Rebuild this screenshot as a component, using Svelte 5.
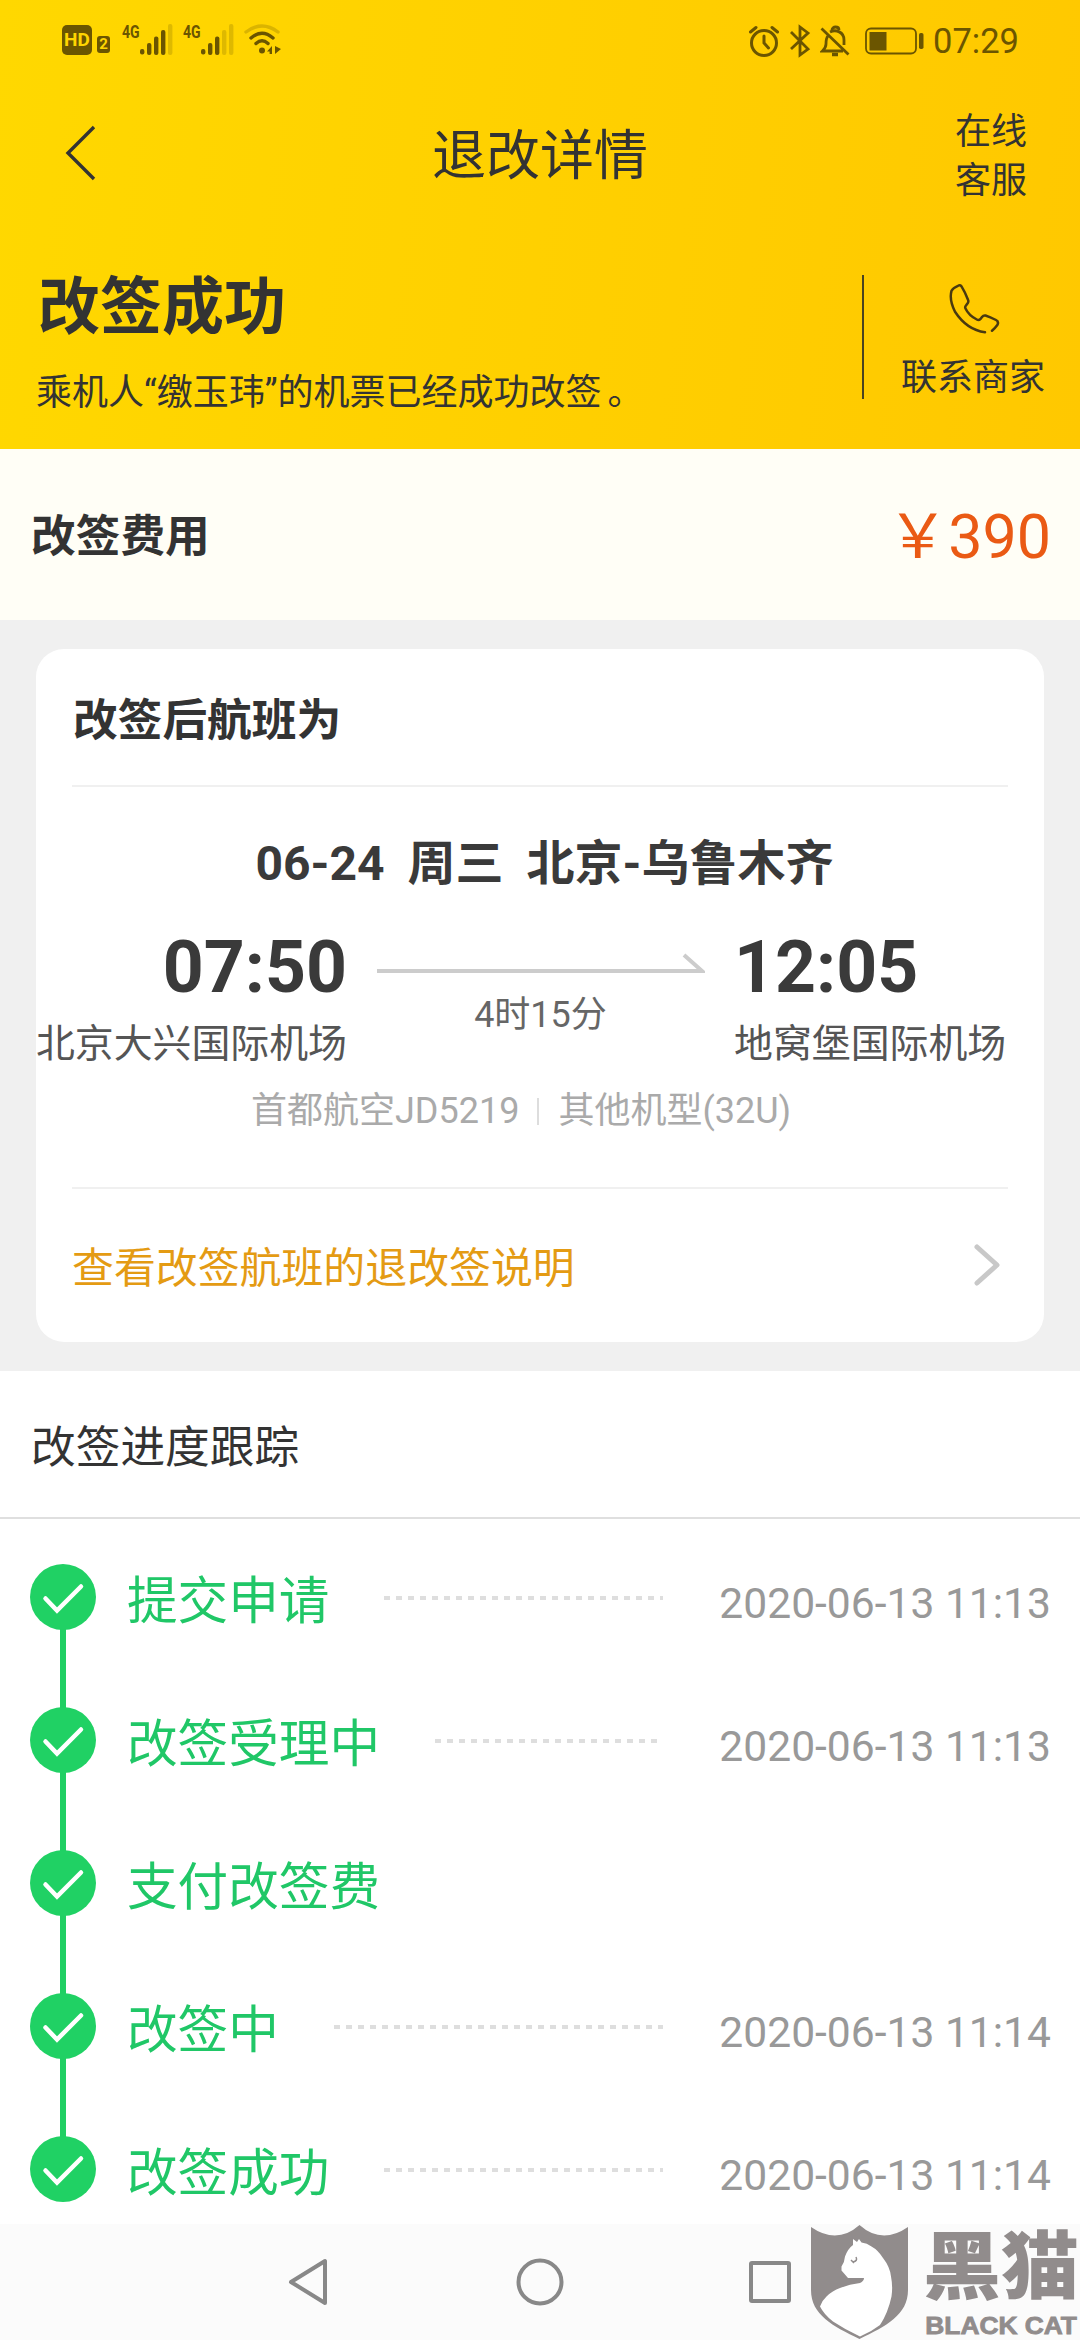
<script lang="ts">
  interface Step {
    name: string;
    time?: string;
  }

  const steps: Step[] = [
    { name: '提交申请', time: '2020-06-13 11:13' },
    { name: '改签受理中', time: '2020-06-13 11:13' },
    { name: '支付改签费' },
    { name: '改签中', time: '2020-06-13 11:14' },
    { name: '改签成功', time: '2020-06-13 11:14' },
  ];

  const signals = [4, 3]; // lit bars per SIM
  const bars = [0, 1, 2, 3, 4];
</script>

<div class="screen">
  <header class="hero">
    <div class="status">
      <div class="status-left">
        <span class="hd">HD</span>
        <span class="sim">2</span>
        {#each signals as lit}
          <div class="signal">
            <span class="net">4G</span>
            <svg width="33" height="31" viewBox="0 0 33 31">
              {#each bars as i}
                <rect
                  x={i * 7}
                  y={[25, 19, 12.5, 6, 0][i]}
                  width="4.4"
                  height={[5.5, 12, 18.5, 25, 31][i]}
                  rx="2"
                  fill="#6b5500"
                  opacity={i < lit ? 1 : 0.22}
                />
              {/each}
            </svg>
          </div>
        {/each}
        <svg class="wifi" width="38" height="31" viewBox="0 0 38 31" fill="none" stroke="#6b5500" stroke-width="3.4" stroke-linecap="round">
          <path d="M2 8Q18 -4 34 8" opacity=".25" />
          <path d="M7 14Q18 4.500 29 14" />
          <path d="M12 19.500Q18 14 24 19.500" />
          <circle cx="18" cy="26.500" r="3" fill="#6b5500" stroke="none" />
          <path d="M28 22v8h-2.400v-2.500h-2.600zM31 22v8l6-5z" fill="#6b5500" stroke="none" />
        </svg>
      </div>
      <div class="status-right">
        <svg width="32" height="32" viewBox="0 0 32 32" fill="none" stroke="#6b5500" stroke-width="3" stroke-linecap="round">
          <circle cx="16" cy="18" r="12.500" />
          <path d="M16 11v7l4.500 5M2.500 7L8 2.500M29.500 7L24 2.500" />
        </svg>
        <svg width="22" height="34" viewBox="0 0 22 34" fill="none" stroke="#6b5500" stroke-width="2.800">
          <path d="M2 8l17 17-8 6V3l8 6L2 25" />
        </svg>
        <svg width="30" height="33" viewBox="0 0 30 33" fill="none" stroke="#6b5500" stroke-width="2.800">
          <path d="M1.500 3.500l27 26M8 11c-2 2-2 5-2 8 0 3-1.500 5-3.500 7H23M10 7c6-3 14 0 14 8v5" />
          <path d="M12 5c0-4 7-4 7 0" />
          <path d="M12 29.500h6" stroke-width="3.500" />
        </svg>
        <svg class="battery" width="60" height="28" viewBox="0 0 60 28">
          <rect x="1" y="1.500" width="50" height="25" rx="5" fill="none" stroke="#6b5500" stroke-width="1.800" />
          <rect x="4.500" y="5" width="17" height="18.500" fill="#6b5500" />
          <rect x="54" y="6" width="4.500" height="16" rx="1.800" fill="#6b5500" />
        </svg>
        <span class="clock">07:29</span>
      </div>
    </div>

    <nav class="navbar">
      <svg class="back" width="32" height="56" viewBox="0 0 32 56" fill="none" stroke="#333" stroke-width="3.400">
        <path d="M29 2L3 28l26 26" />
      </svg>
      <h1>退改详情</h1>
      <div class="service">在线<br />客服</div>
    </nav>

    <div class="result">
      <div class="result-text">
        <h2>改签成功</h2>
        <p>乘机人“缴玉玮”的机票已经成功改签<span class="stop">。</span></p>
      </div>
      <div class="contact">
        <svg width="52" height="52" viewBox="0 0 52 52" fill="none" stroke="#4a3a10" stroke-width="2.500" stroke-linecap="round" stroke-linejoin="round">
          <path d="M43 46.700q3-2.500 5.500-6 1.500-3.200-1.500-4.700-6-3-10.500-4.500-2-.5-3.500 1.500l-1.700 2.200q-1.500 1.500-3.500.3-8-4-11.300-11-.8-1.500.5-3l1.800-2.500q1-1.500.2-3.200-3-8-6.500-13.500-1.500-1.700-3.500-.5-5 2-6.500 5-2.500 9 3.500 21Q18 46 36 48.300" />
        </svg>
        <span>联系商家</span>
      </div>
    </div>
  </header>

  <section class="fee">
    <h3>改签费用</h3>
    <span class="price">￥390</span>
  </section>

  <section class="flight-wrap">
    <div class="card">
      <h3 class="card-title">改签后航班为</h3>

      <div class="flight">
        <div class="route">
          <span>06-24</span>
          <span>周三</span>
          <span>北京-乌鲁木齐</span>
        </div>
        <div class="legs">
          <div class="leg from">
            <strong>07:50</strong>
            <span>北京大兴国际机场</span>
          </div>
          <div class="duration">
            <svg width="328" height="22" viewBox="0 0 328 22" fill="none" stroke="#ccc" stroke-width="4">
              <path d="M0 19h325L307 3" />
            </svg>
            <span>4时15分</span>
          </div>
          <div class="leg">
            <strong>12:05</strong>
            <span>地窝堡国际机场</span>
          </div>
        </div>
        <div class="plane">
          <span>首都航空JD5219</span>
          <i></i>
          <span>其他机型(32U)</span>
        </div>
      </div>

      <div class="rules">
        <span>查看改签航班的退改签说明</span>
        <svg width="30" height="44" viewBox="0 0 30 44" fill="none" stroke="#c8c8c8" stroke-width="5" stroke-linecap="round" stroke-linejoin="round">
          <path d="M4 4l20 18L4 40" />
        </svg>
      </div>
    </div>
  </section>

  <section class="progress">
    <h3>改签进度跟踪</h3>
    <ul>
      {#each steps as step}
        <li>
          <svg class="check" width="66" height="66" viewBox="0 0 66 66">
            <circle cx="33" cy="33" r="33" fill="#20d164" />
            <path d="M15.500 34.500l11.500 12L51 22.500" fill="none" stroke="#fff" stroke-width="4.500" stroke-linecap="round" />
          </svg>
          <span class="name">{step.name}</span>
          {#if step.time}
            <span class="dots"></span>
            <time>{step.time}</time>
          {/if}
        </li>
      {/each}
    </ul>
  </section>

  <footer class="system-nav">
    <svg width="42" height="50" viewBox="0 0 42 50"><path d="M38 4v42L4 25z" /></svg>
    <svg width="50" height="50" viewBox="0 0 50 50"><circle cx="25" cy="25" r="21.500" /></svg>
    <svg width="44" height="44" viewBox="0 0 44 44"><rect x="3" y="3" width="38" height="38" rx="1" /></svg>
  </footer>

  <div class="watermark">
    <svg width="97" height="115" viewBox="0 0 97 115">
      <path d="M0 2Q26 20 48.500 0 71 20 97 2V65C97 90 75 101 48.500 114 22 101 0 90 0 65z" fill="#918c8c" />
      <path d="M42 14l4 3 2-3 2.500 3.500Q56 18 60.500 21.500 67 25 72 33q7 9 8 18.500 2 10 .500 20Q77 88 69 100q-9 7-20 11.500-15-7-27-15-9-7-13-15 2-6 6.500-10 6-6 13.500-8.500Q39 59 49 58q4-2 4-5H37l-6.500-7.500v-4q3-4 3.500-10 3-8 8-11.500z" fill="#fff" />
      <path d="M40 35l3 3M45 32q2 4-3 5" fill="none" stroke="#918c8c" stroke-width="1.500" />
    </svg>
    <div class="brand">
      <span class="brand-cn">黑猫</span>
      <span class="brand-en">BLACK CAT</span>
    </div>
  </div>
</div>

<style>
  :global(body) {
    background: #fff;
  }

  .screen {
    position: relative;
    display: flex;
    flex-direction: column;
    width: 1080px;
    height: 2340px;
    overflow: hidden;
    background: #fff;
    color: #333;
    font-family: Roboto, "Noto Sans CJK SC", sans-serif;
  }

  h1, h2, h3, p, ul {
    margin: 0;
    padding: 0;
  }

  svg {
    display: block;
    flex: none;
  }

  .hero {
    height: 449px;
    background: linear-gradient(97deg, #ffd800, #ffd000 50%, #ffc800);
  }

  /* ── Status bar ── */
  .status {
    display: flex;
    justify-content: space-between;
    height: 82px;
    padding: 0 61px 0 62px;
    box-sizing: border-box;
    color: #6b5500;
  }

  .status-left {
    display: flex;
    align-items: flex-end;
    padding-bottom: 27px;
  }

  .hd {
    width: 30px;
    height: 30px;
    border-radius: 5px;
    background: #6b5500;
    color: #ffd500;
    font-size: 19px;
    font-weight: 700;
    line-height: 30px;
    text-align: center;
  }

  .sim {
    width: 13px;
    height: 17px;
    margin: 0 12px 2px 5px;
    border-radius: 3px;
    background: #6b5500;
    color: #ffd500;
    font-size: 15px;
    font-weight: 700;
    line-height: 17px;
    text-align: center;
  }

  .signal {
    display: flex;
    align-items: flex-end;
    width: 61px;
  }

  .net {
    align-self: flex-start;
    width: 18px;
    font-size: 18px;
    font-weight: 700;
    line-height: 16px;
    transform: scaleX(0.78);
    transform-origin: left;
  }

  .status-right {
    display: flex;
    align-items: center;
  }

  .status-right svg {
    margin-right: 9px;
  }

  .status-right .battery {
    margin: 0 8px 0 6px;
  }

  .clock {
    font-size: 34.5px;
    line-height: 40px;
  }

  /* ── Header ── */
  .navbar {
    display: grid;
    grid-template-columns: 1fr auto 1fr;
    align-items: center;
    height: 144px;
    padding: 0 53px 0 65px;
  }

  .back {
    margin-top: -2px;
  }

  h1 {
    margin-right: 12px;
    padding-top: 6px;
    font-size: 54px;
    font-weight: 400;
    line-height: 64px;
  }

  .service {
    justify-self: end;
    padding-top: 6px;
    font-size: 36px;
    line-height: 49px;
  }

  .result {
    display: flex;
    justify-content: space-between;
    align-items: flex-start;
    padding: 49px 35px 0 36px;
  }

  h2 {
    padding-left: 2px;
    font-size: 62px;
    line-height: 66px;
  }

  .result p {
    margin-top: 32px;
    font-size: 36px;
    line-height: 40px;
  }

  .stop {
    margin-left: 6px;
  }

  .contact {
    display: flex;
    flex-direction: column;
    align-items: center;
    gap: 22px;
    height: 124px;
    padding: 9px 0 0 37px;
    box-sizing: border-box;
    border-left: 2px solid #4a4320;
    font-size: 36px;
    line-height: 40px;
  }

  .contact svg {
    margin-left: 5px;
  }

  /* ── Fee ── */
  .fee {
    display: flex;
    justify-content: space-between;
    align-items: center;
    height: 171px;
    padding: 5px 29px 0 31px;
    box-sizing: border-box;
    background: #fffef6;
  }

  h3 {
    font-size: 44.700px;
    line-height: 56px;
  }

  .price {
    color: #ea5a14;
    font-size: 61px;
    line-height: 72px;
  }

  /* ── Flight card ── */
  .flight-wrap {
    height: 693px;
    padding: 29px 36px;
    background: #f0f0f0;
  }

  .card {
    height: 693px;
    border-radius: 28px;
    background: #fff;
  }

  .card-title {
    height: 136px;
    margin: 0 36px;
    padding-left: 1px;
    border-bottom: 2px solid #f0f0f0;
    line-height: 144px;
  }

  .flight {
    height: 400px;
    padding-top: 48px;
    box-sizing: border-box;
    color: #3a3a3a;
  }

  .route {
    display: flex;
    justify-content: center;
    gap: 23px;
    padding-left: 9px;
    font-size: 48px;
    font-weight: 700;
    line-height: 58px;
  }

  .legs {
    display: grid;
    grid-template-columns: 311px 1fr 310px;
    padding-top: 35px;
  }

  .leg {
    display: flex;
    flex-direction: column;
    padding-top: 2px;
    white-space: nowrap;
  }

  .leg.from {
    align-items: flex-end;
  }

  .leg strong {
    font-size: 71.500px;
    line-height: 76px;
  }

  .leg span {
    margin-top: 14px;
    color: #555;
    font-size: 38.900px;
    line-height: 48px;
  }

  .duration {
    display: flex;
    flex-direction: column;
    align-items: center;
    padding-top: 24px;
    color: #666;
    font-size: 36px;
    line-height: 44px;
  }

  .duration span {
    margin-top: 19px;
  }

  .plane {
    display: flex;
    align-items: center;
    margin: 19px 0 0 215px;
    color: #aaa;
    font-size: 36px;
    line-height: 48px;
  }

  .plane i {
    width: 2px;
    height: 27px;
    margin: 0 19px 0 18px;
    background: #ddd;
  }

  .rules {
    display: flex;
    justify-content: space-between;
    align-items: center;
    height: 155px;
    margin: 0 36px;
    border-top: 2px solid #f0f0f0;
    color: #e49b13;
    font-size: 41.900px;
  }

  .rules span {
    margin-top: -4px;
  }

  .rules svg {
    margin: -4px 5px 0 0;
  }

  /* ── Progress ── */
  .progress h3 {
    height: 146px;
    padding-left: 31px;
    border-bottom: 2px solid #dfdfdf;
    font-weight: 400;
    line-height: 154px;
  }

  .progress ul {
    padding: 45px 29px 0 30px;
    list-style: none;
  }

  .progress li {
    position: relative;
    display: flex;
    align-items: flex-start;
    height: 143px;
  }

  .progress li:not(:last-child)::before {
    content: '';
    position: absolute;
    top: 60px;
    left: 30px;
    width: 6px;
    height: 90px;
    background: #20cf63;
  }

  .check {
    position: relative;
  }

  .name {
    margin: 6px 0 0 31px;
    color: #20c767;
    font-size: 50.600px;
    line-height: 64px;
  }

  .dots {
    flex: 1;
    height: 4px;
    margin: 32px 56px 0 55px;
    background: repeating-linear-gradient(90deg, #dedede 0 6px, transparent 6px 12px);
  }

  time {
    margin-top: 14px;
    color: #999;
    font-size: 42.600px;
    line-height: 50px;
  }

  /* ── System navigation ── */
  .system-nav {
    position: absolute;
    inset: auto 0 0;
    display: flex;
    justify-content: space-between;
    align-items: center;
    height: 116px;
    padding: 0 288px 0 287px;
    box-sizing: border-box;
    background: #fbfbfb;
  }

  .system-nav svg {
    fill: none;
    stroke: #888;
    stroke-width: 4;
    stroke-linejoin: round;
  }

  .system-nav svg:nth-child(2) {
    margin-left: 3px;
  }

  .watermark {
    position: absolute;
    right: 0;
    bottom: 0;
    display: flex;
    gap: 15px;
    width: 269px;
    height: 115px;
    color: #918c8c;
  }

  .brand {
    width: 157px;
    white-space: nowrap;
  }

  .brand-cn {
    display: block;
    font-size: 78px;
    font-weight: 900;
    line-height: 88px;
    transform: scaleY(0.94);
  }

  .brand-en {
    display: block;
    padding-left: 2px;
    font-family: "Liberation Sans", sans-serif;
    font-size: 23px;
    font-weight: 700;
    line-height: 26px;
    -webkit-text-stroke: 0.8px #918c8c;
    transform: scaleX(1.145);
    transform-origin: left;
  }
</style>
